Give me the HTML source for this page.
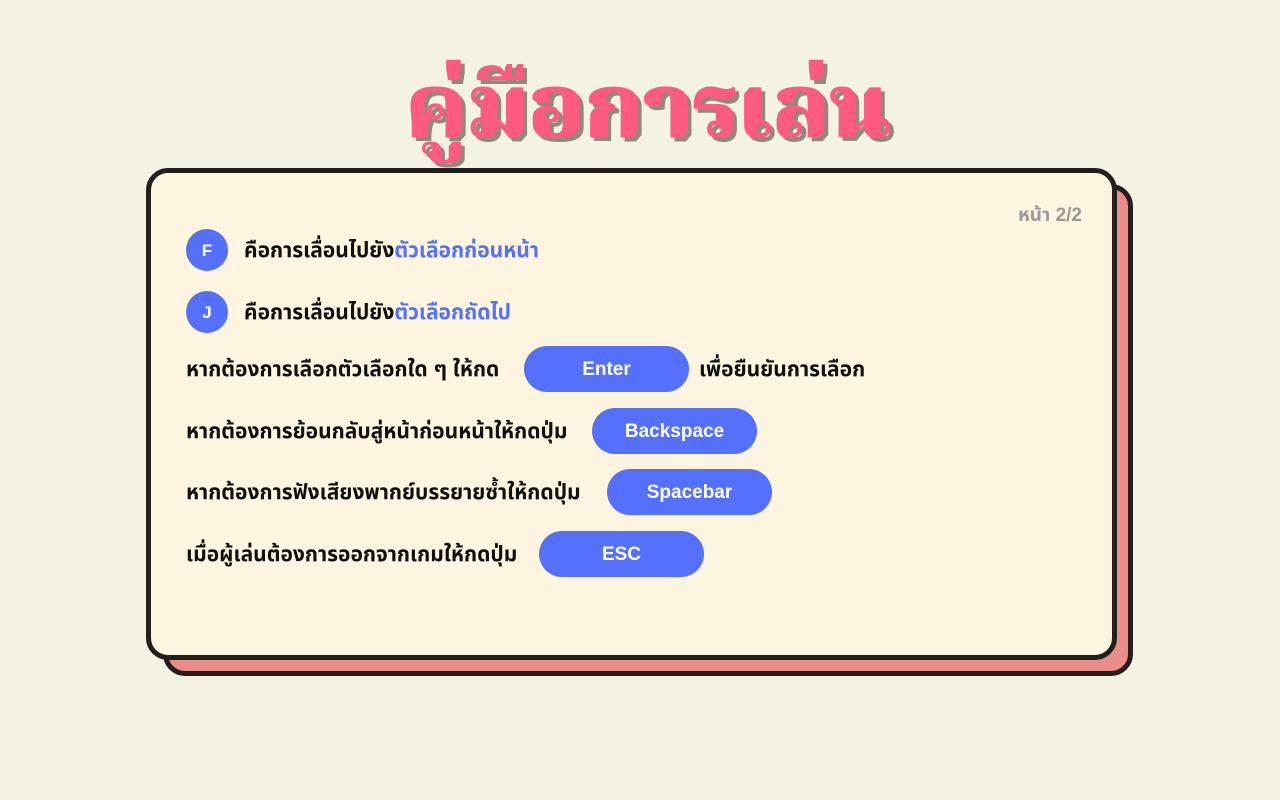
<!DOCTYPE html>
<html><head><meta charset="utf-8"><style>
*{margin:0;padding:0;box-sizing:border-box}
body{width:1280px;height:800px;overflow:hidden;background:#f3f2e3;font-family:"Liberation Sans","Noto Sans Thai","Loma","Garuda",sans-serif;position:relative}
.title{position:absolute;left:8px;width:1280px;top:42px;text-align:center;font-size:90px;font-weight:900;color:#ff5a80;text-shadow:4px 4px 0 #8f8a80;font-family:"Liberation Serif","Noto Serif Thai","Noto Sans Thai",serif}
.shadow{position:absolute;left:163px;top:184px;width:970px;height:492px;background:#e88d88;border:5px solid #231f1f;border-radius:22px}
.card{position:absolute;left:146px;top:168px;width:971px;height:492px;background:#fdf5e0;border:5px solid #231f1f;border-radius:22px}
.page{position:absolute;right:30px;top:28px;color:#9a9a9a;font-weight:bold;font-size:19px}
.row{position:absolute;left:35px;display:flex;align-items:center;font-weight:bold;font-size:21px;color:#111;height:46px}
.row>span{position:relative;top:1px}
.c{width:42px;height:42px;border-radius:50%;background:#5470fd;color:#fff;display:flex;align-items:center;justify-content:center;font-size:17px;margin-right:16px;line-height:1}
.b{color:#5470fd}
.btn{height:46px;width:165px;border-radius:23px;background:#5470fd;color:#fff;display:flex;align-items:center;justify-content:center;font-size:19px;line-height:1;margin:0 10px 0 0}
</style></head><body>
<div class="title">คู่มือการเล่น</div>
<div class="shadow"></div>
<div class="card">
<div class="page">หน้า 2/2</div>
<div class="row" style="top:54px"><div class="c">F</div><span>คือการเลื่อนไปยัง<span class="b">ตัวเลือกก่อนหน้า</span></span></div>
<div class="row" style="top:116px"><div class="c">J</div><span>คือการเลื่อนไปยัง<span class="b">ตัวเลือกถัดไป</span></span></div>
<div class="row" style="top:173px"><span style="width:338px">หากต้องการเลือกตัวเลือกใด ๆ ให้กด</span><div class="btn">Enter</div><span>เพื่อยืนยันการเลือก</span></div>
<div class="row" style="top:235px"><span style="width:406px">หากต้องการย้อนกลับสู่หน้าก่อนหน้าให้กดปุ่ม</span><div class="btn">Backspace</div></div>
<div class="row" style="top:296px"><span style="width:421px">หากต้องการฟังเสียงพากย์บรรยายซ้ำให้กดปุ่ม</span><div class="btn">Spacebar</div></div>
<div class="row" style="top:358px"><span style="width:353px">เมื่อผู้เล่นต้องการออกจากเกมให้กดปุ่ม</span><div class="btn">ESC</div></div>
</div>
</body></html>
